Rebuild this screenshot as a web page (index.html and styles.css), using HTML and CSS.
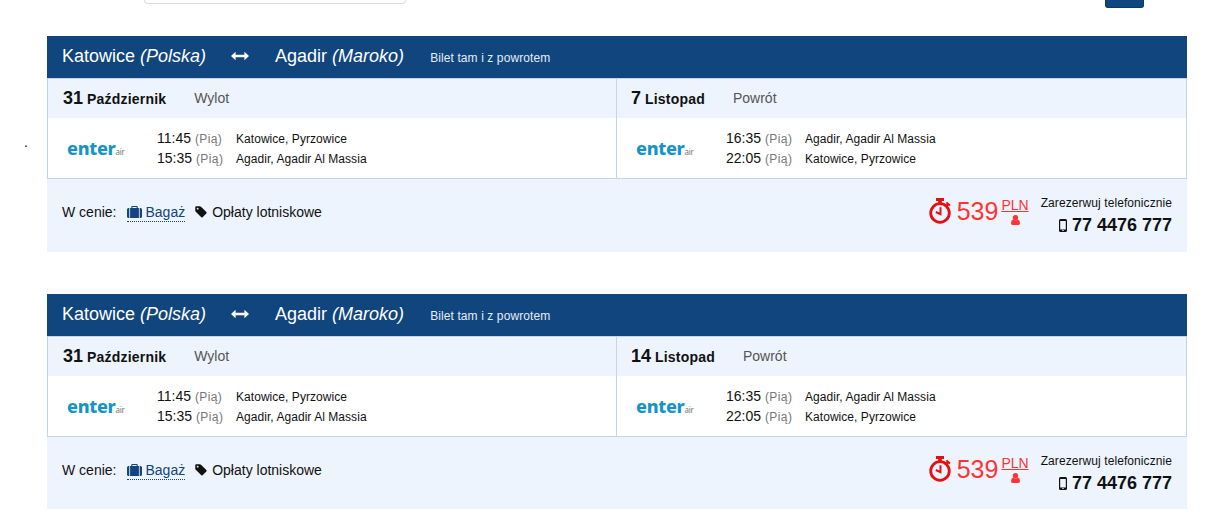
FILE: index.html
```html
<!DOCTYPE html>
<html lang="pl">
<head>
    <meta charset="UTF-8">
    <meta name="viewport" content="width=device-width, initial-scale=1.0">
    <title>Bilety Katowice - Agadir</title>
    <link rel="stylesheet" href="styles.css">
</head>
<body>
    <!-- shared icons -->
    <svg class="icons" width="0" height="0">
        <symbol id="icon-arrows" viewBox="0 0 18 10">
            <path d="M0 5L4.6 0.8V3.8H13.4V0.8L18 5L13.4 9.2V6.2H4.6V9.2Z"/>
        </symbol>
        <symbol id="icon-suitcase" viewBox="0 0 15 12">
            <path d="M0 3.5Q0 2 1.5 2H2.3V12H1.5Q0 12 0 10.5ZM3.1 2H4.3V1Q4.3 0 5.3 0H9.7Q10.7 0 10.7 1V2H11.9V12H3.1ZM5.4 2H9.6V1.1H5.4ZM12.7 2H13.5Q15 2 15 3.5V10.5Q15 12 13.5 12H12.7Z" fill-rule="evenodd"/>
        </symbol>
        <symbol id="icon-tag" viewBox="0 0 13 13">
            <path d="M0.3 1.3Q0.3 0.3 1.3 0.3H5Q6 0.3 6.8 1.1L12.3 6.6Q13 7.3 12.3 8L8.2 12.2Q7.5 12.8 6.8 12.2L1.1 6.6Q0.3 5.8 0.3 4.8ZM2.9 1.9A1 1 0 1 0 2.9 3.9A1 1 0 1 0 2.9 1.9Z" fill-rule="evenodd"/>
        </symbol>
        <symbol id="icon-stopwatch" viewBox="0 0 22 26">
            <path d="M7 0H15V3H12.8V5H9.2V3H7Z"/>
            <path d="M18.1 3.7L21.6 6.8L20.2 8.4L19.2 7.5L18 8.8L16.4 7.3L17.7 5.9L16.7 5.1Z"/>
            <circle cx="11" cy="15" r="9.3" fill="none" stroke="currentColor" stroke-width="2.8"/>
            <path d="M11.5 9.3V16.2L6.8 14" fill="none" stroke="currentColor" stroke-width="2"/>
        </symbol>
        <symbol id="icon-user" viewBox="0 0 9 10">
            <circle cx="4.5" cy="2.7" r="2.7"/>
            <path d="M2 4.6Q4.5 6.6 7 4.6Q9 5.2 9 8.2Q9 10 7.5 10H1.5Q0 10 0 8.2Q0 5.2 2 4.6Z"/>
        </symbol>
        <symbol id="icon-mobile" viewBox="0 0 8 13">
            <path d="M1.5 0H6.5Q8 0 8 1.5V11.5Q8 13 6.5 13H1.5Q0 13 0 11.5V1.5Q0 0 1.5 0ZM1.2 2V10.4H6.8V2ZM3.3 11.1V12.1H4.7V11.1Z" fill-rule="evenodd"/>
        </symbol>
    </svg>

    <div class="search-bar">
        <div class="search-input"></div>
        <div class="search-button"></div>
    </div>

    <span class="dot">.</span>

    <div class="offers">
        <div class="offer">
            <div class="offer-header">
                <span class="city">Katowice <i>(Polska)</i></span>
                <svg class="arrows"><use href="#icon-arrows"/></svg>
                <span class="city">Agadir <i>(Maroko)</i></span>
                <span class="ticket-type">Bilet tam i z powrotem</span>
            </div>
            <div class="flights">
                <div class="flight">
                    <div class="flight-date"><b class="day">31</b><b class="month">Październik</b><span>Wylot</span></div>
                    <div class="flight-info">
                        <div class="logo">enter<small>air</small></div>
                        <div class="hours">
                            <div>11:45 <span>(Pią)</span></div>
                            <div>15:35 <span>(Pią)</span></div>
                        </div>
                        <div class="airports">
                            <div>Katowice, Pyrzowice</div>
                            <div>Agadir, Agadir Al Massia</div>
                        </div>
                    </div>
                </div>
                <div class="flight">
                    <div class="flight-date"><b class="day">7</b><b class="month">Listopad</b><span>Powrót</span></div>
                    <div class="flight-info">
                        <div class="logo">enter<small>air</small></div>
                        <div class="hours">
                            <div>16:35 <span>(Pią)</span></div>
                            <div>22:05 <span>(Pią)</span></div>
                        </div>
                        <div class="airports">
                            <div>Agadir, Agadir Al Massia</div>
                            <div>Katowice, Pyrzowice</div>
                        </div>
                    </div>
                </div>
            </div>
            <div class="offer-footer">
                <div class="included">
                    <span class="label">W cenie:</span>
                    <a class="baggage"><svg class="suitcase"><use href="#icon-suitcase"/></svg>Bagaż</a>
                    <span class="fees"><svg class="tag"><use href="#icon-tag"/></svg>Opłaty lotniskowe</span>
                </div>
                <div class="price">
                    <svg class="stopwatch"><use href="#icon-stopwatch"/></svg>
                    <span class="amount">539</span>
                    <div class="currency">
                        <u>PLN</u>
                        <svg class="user"><use href="#icon-user"/></svg>
                    </div>
                </div>
                <div class="phone">
                    <div class="phone-text">Zarezerwuj telefonicznie</div>
                    <div class="phone-number"><svg class="mobile"><use href="#icon-mobile"/></svg>77 4476 777</div>
                </div>
            </div>
        </div>

        <div class="offer">
            <div class="offer-header">
                <span class="city">Katowice <i>(Polska)</i></span>
                <svg class="arrows"><use href="#icon-arrows"/></svg>
                <span class="city">Agadir <i>(Maroko)</i></span>
                <span class="ticket-type">Bilet tam i z powrotem</span>
            </div>
            <div class="flights">
                <div class="flight">
                    <div class="flight-date"><b class="day">31</b><b class="month">Październik</b><span>Wylot</span></div>
                    <div class="flight-info">
                        <div class="logo">enter<small>air</small></div>
                        <div class="hours">
                            <div>11:45 <span>(Pią)</span></div>
                            <div>15:35 <span>(Pią)</span></div>
                        </div>
                        <div class="airports">
                            <div>Katowice, Pyrzowice</div>
                            <div>Agadir, Agadir Al Massia</div>
                        </div>
                    </div>
                </div>
                <div class="flight">
                    <div class="flight-date"><b class="day">14</b><b class="month">Listopad</b><span>Powrót</span></div>
                    <div class="flight-info">
                        <div class="logo">enter<small>air</small></div>
                        <div class="hours">
                            <div>16:35 <span>(Pią)</span></div>
                            <div>22:05 <span>(Pią)</span></div>
                        </div>
                        <div class="airports">
                            <div>Agadir, Agadir Al Massia</div>
                            <div>Katowice, Pyrzowice</div>
                        </div>
                    </div>
                </div>
            </div>
            <div class="offer-footer">
                <div class="included">
                    <span class="label">W cenie:</span>
                    <a class="baggage"><svg class="suitcase"><use href="#icon-suitcase"/></svg>Bagaż</a>
                    <span class="fees"><svg class="tag"><use href="#icon-tag"/></svg>Opłaty lotniskowe</span>
                </div>
                <div class="price">
                    <svg class="stopwatch"><use href="#icon-stopwatch"/></svg>
                    <span class="amount">539</span>
                    <div class="currency">
                        <u>PLN</u>
                        <svg class="user"><use href="#icon-user"/></svg>
                    </div>
                </div>
                <div class="phone">
                    <div class="phone-text">Zarezerwuj telefonicznie</div>
                    <div class="phone-number"><svg class="mobile"><use href="#icon-mobile"/></svg>77 4476 777</div>
                </div>
            </div>
        </div>
    </div>
</body>
</html>
```
FILE: styles.css
```css
* {
    box-sizing: border-box;
}

body {
    font-family: "Liberation Sans", Arial, sans-serif;
    font-size: 14px;
    line-height: 20px;
    color: #111;
    background-color: #fff;
    margin: 0;
    white-space: nowrap;
}

svg {
    fill: currentColor;
    flex: none;
}

.icons {
    position: absolute;
}

.search-bar {
    display: flex;
    justify-content: space-between;
    width: 1000px;
    height: 36px;
    margin-left: 144px;
}

.search-input {
    width: 262px;
    height: 4px;
    border: 1px solid #ddd;
    border-top: none;
    border-radius: 0 0 4px 4px;
}

.search-button {
    width: 39px;
    height: 8px;
    background-color: #11457e;
    border: 1px solid #0c3768;
    border-top: none;
    border-radius: 0 0 3px 3px;
}

.dot {
    position: absolute;
    left: 24px;
    top: 132px;
}

.offers {
    width: 1140px;
    margin-left: 47px;
}

.offer {
    margin-bottom: 42px;
}

.offer:last-child {
    margin-bottom: 0;
}

.offer-header {
    display: flex;
    align-items: center;
    height: 42px;
    padding: 0 15px 2px;
    font-size: 18px;
    color: #fff;
    background-color: #11457e;
}

.arrows {
    width: 18px;
    height: 10px;
    margin: 0 26px 0 25px;
}

.ticket-type {
    margin: 3px 0 0 26px;
    font-size: 12px;
    letter-spacing: 0.1px;
    color: #e4edf7;
}

.flights {
    display: flex;
    height: 101px;
    border: 1px solid #c5d6e3;
}

.flight {
    width: 568px;
}

.flight + .flight {
    width: 570px;
    border-left: 1px solid #c5d6e3;
}

.flight-date {
    display: flex;
    align-items: baseline;
    height: 39px;
    padding: 9px 15px 0;
    background-color: #edf4fd;
}

.flight + .flight .flight-date {
    padding-left: 14px;
}

.flight-date .day {
    font-size: 18px;
    margin-right: 4px;
}

.flight-date .month {
    letter-spacing: 0.2px;
}

.flight-date span {
    align-self: flex-start;
    margin-left: 28px;
    color: #555;
}

.flight-info {
    display: flex;
    padding-top: 11px;
}

.logo {
    width: 90px;
    margin-left: 19px;
    padding-top: 9px;
    font-family: "Noto Sans", sans-serif;
    font-size: 18px;
    font-weight: 800;
    letter-spacing: -0.3px;
    color: #1694c8;
}

.logo small {
    font-size: 8px;
    font-weight: normal;
    letter-spacing: -0.2px;
    color: #777;
}

.hours {
    width: 79px;
    margin-top: -1px;
}

.hours div {
    height: 20px;
}

.hours span {
    font-size: 12px;
    letter-spacing: 0.4px;
    color: #777;
}

.airports {
    font-size: 12px;
    letter-spacing: 0.05px;
}

.offer-footer {
    display: flex;
    height: 73px;
    padding: 0 15px;
    background-color: #edf4fd;
}

.offer:last-child .offer-footer {
    height: 72px;
}

.included {
    display: flex;
    align-items: flex-start;
    flex: 1;
    padding-top: 23px;
}

.baggage {
    display: flex;
    align-items: center;
    height: 20px;
    margin: 0 10px 0 11px;
    padding-top: 1px;
    color: #11457e;
    border-bottom: 1px dotted #11457e;
}

.suitcase {
    width: 15px;
    height: 12px;
    margin-right: 3px;
}

.fees {
    display: flex;
    align-items: center;
}

.tag {
    width: 12px;
    height: 12px;
    margin-right: 5px;
}

.price {
    display: flex;
    align-items: flex-start;
    width: 112px;
    padding-top: 19px;
    color: #f33;
}

.stopwatch {
    width: 22px;
    height: 26px;
    color: #e60f0f;
}

.amount {
    margin: 3px 3px 0 6px;
    font-size: 25px;
}

.currency {
    display: flex;
    flex-direction: column;
    align-items: center;
    margin-top: -1px;
    line-height: 16px;
}

.user {
    width: 9px;
    height: 10px;
    margin-top: 2px;
}

.phone {
    padding-top: 14px;
    text-align: right;
}

.phone-text {
    font-size: 12px;
    letter-spacing: 0.08px;
}

.phone-number {
    display: flex;
    align-items: center;
    justify-content: flex-end;
    height: 24px;
    font-size: 18px;
    font-weight: bold;
}

.mobile {
    width: 8px;
    height: 13px;
    margin-right: 5px;
}
```
